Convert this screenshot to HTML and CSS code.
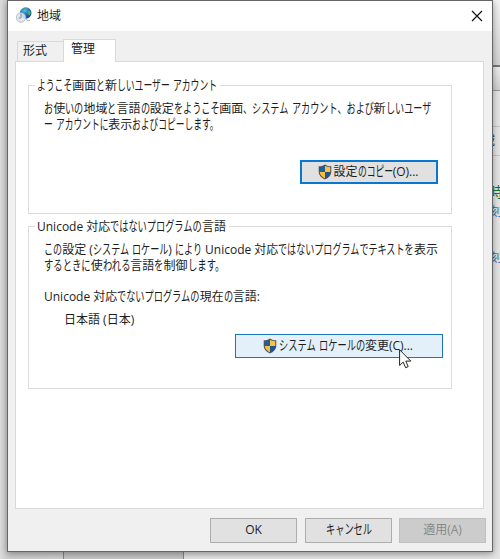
FILE: index.html
```html
<!DOCTYPE html>
<html lang="ja">
<head>
<meta charset="utf-8">
<title>地域</title>
<link rel="stylesheet" href="styles.css">
</head>
<body>
<svg width="0" height="0" class="defs"><defs>
<symbol id="shield" viewBox="0 0 14 16">
<path d="M7 .5C5.3 1.9 3.2 2.3.7 2.3v5.2c0 4 2.8 6.4 6.3 8 3.5-1.6 6.3-4 6.3-8V2.3C10.8 2.3 8.7 1.9 7 .5Z" fill="#4c5358"/>
<path d="M7 1.8C5.5 2.8 3.7 3.2 1.7 3.3V8H7Z" fill="#1e5f9f"/>
<path d="M7 1.8C8.5 2.8 10.3 3.2 12.3 3.3V8H7Z" fill="#fbc23f"/>
<path d="M1.7 8c.2 3.1 2.4 5 5.3 6.4V8Z" fill="#f9bd36"/>
<path d="M12.3 8c-.2 3.1-2.4 5-5.3 6.4V8Z" fill="#1d559b"/>
</symbol></defs></svg>
<div class="desktop">
  <div class="strip">
    <div class="s1"></div><div class="s2"></div><div class="s3"></div><div class="s4"><span>域</span></div>
    <div class="s5"><b>時</b><a>刻</a><a class="low">刻</a></div>
  </div>
  <div class="pane"></div><div class="pane2"></div>
  <main class="dialog">
    <header class="titlebar">
      <svg class="globe" width="16" height="16" viewBox="0 0 16 16">
        <defs><radialGradient id="g" cx=".4" cy=".25" r=".8"><stop offset="0" stop-color="#5cc5ef"/><stop offset=".5" stop-color="#1c70bd"/><stop offset="1" stop-color="#123a92"/></radialGradient></defs>
        <circle cx="9.7" cy="6" r="5.8" fill="url(#g)"/>
        <path d="M5.5 3 8 .7l2 .4-1 1.5-2 1ZM11.5 4l2.4-.8 1 3-1.6 2.4-2-2Z" fill="#49a958"/>
        <circle cx="5" cy="10.5" r="4.7" fill="#e0e7ec" fill-opacity=".9" stroke="#a6b4be" stroke-width=".8"/>
        <path d="M5 7v4H2.7" fill="none" stroke="#7891a2"/>
        <path d="M10 12.5q2 2 4 1" fill="none" stroke="#a1adb8"/>
      </svg>
      <span class="line">地域</span>
      <svg class="close" width="12" height="12" viewBox="0 0 12 12"><path d="M1 1 11 11M11 1 1 11" stroke="#111" stroke-width="1.15"/></svg>
    </header>
    <nav class="tabs"><div class="tab"><span class="line">形式</span></div><div class="tab active"><span class="line">管理</span></div></nav>
    <section class="page">
      <div class="group welcome">
        <h2><span class="line" data-width="180">ようこそ画面と新しいユーザー アカウント</span></h2>
        <p><span class="line" data-width="387">お使いの地域と言語の設定をようこそ画面、システム アカウント、および新しいユーザ</span></p>
        <p><span class="line" data-width="175">ー アカウントに表示およびコピーします。</span></p>
        <button class="btn copy"><svg width="14" height="16"><use href="#shield"/></svg><span class="line" data-width="85">設定のコピー(O)...</span></button>
      </div>
      <div class="group locale">
        <h2><span class="line" data-width="189">Unicode 対応ではないプログラムの言語</span></h2>
        <p><span class="line" data-width="394">この設定 (システム ロケール) により Unicode 対応ではないプログラムでテキストを表示</span></p>
        <p><span class="line" data-width="180">するときに使われる言語を制御します。</span></p>
        <p class="current"><span class="line" data-width="216">Unicode 対応でないプログラムの現在の言語:</span></p>
        <p class="value"><span class="line">日本語 (日本)</span></p>
        <button class="btn change"><svg width="14" height="16"><use href="#shield"/></svg><span class="line" data-width="134">システム ロケールの変更(C)...</span></button>
      </div>
    </section>
    <footer class="actions">
      <button class="btn"><span class="line">OK</span></button>
      <button class="btn"><span class="line" data-width="46">キャンセル</span></button>
      <button class="btn disabled"><span class="line">適用(A)</span></button>
    </footer>
  </main>
  <svg class="cursor" width="13" height="20" viewBox="0 0 13 20"><path d="M.6.8v15.7l3.6-3.4 2.4 5.6 2.6-1.1-2.4-5.5h5Z" fill="#fff" stroke="#222"/></svg>
</div>
<script src="script.js"></script>
</body>
</html>
```
FILE: styles.css
```css
* { box-sizing: border-box; }
body { margin: 0; font: 12px/16px "Open Sans", "Noto Sans CJK JP", sans-serif; color: #1c1c1c; }
.defs { position: absolute; }
.desktop { position: relative; width: 500px; height: 559px; overflow: hidden; background: linear-gradient(90deg, #dcdcdc 0, #d0d0d0 7px, #dedede 300px); }
.strip { position: absolute; left: 490px; top: 0; width: 10px; height: 559px; background: #e5e5e5; }
.s1 { height: 67px; background: linear-gradient(#f4f4f4, #d3d3d3); border-bottom: 2px solid #777; }
.s2 { height: 24px; background: linear-gradient(#ededed, #cfcfcf); border-bottom: 1px solid #999; }
.s3 { height: 36px; border-bottom: 1px solid #c4c4c4; }
.s4 { height: 29px; padding-top: 6px; border-bottom: 1px solid #c4c4c4; }
.s4 span { margin-left: -7px; }
.s5 { padding-top: 26px; }
.s5 b, .s5 a { display: block; width: 14px; height: 20px; line-height: 20px; color: #246fab; }
.s5 b { color: #16762d; font-size: 14px; font-weight: 400; margin-left: -1px; }
.s5 .low { margin-top: 26px; }
.pane { position: absolute; left: 63px; top: 540px; width: 121px; height: 19px; background: #c8c8c8; border: solid #868686; border-width: 0 1px; }
.pane2 { position: absolute; left: 184px; top: 540px; width: 316px; height: 19px; background: #e5e5e5; }
.dialog { position: relative; display: flex; flex-direction: column; width: 486px; height: 552px; margin-left: 7px; border: 1px solid #666; background: #f0f0f0; box-shadow: 0 2px 7px rgba(0,0,0,.38); }
.titlebar { display: flex; align-items: center; height: 30px; padding: 0 9px 0 8px; background: #fff; }
.globe { margin-top: -2px; }
.titlebar .line { margin-left: 5px; }
.close { margin-left: auto; margin-top: -1px; }
.line { white-space: pre; display: inline-block; }
.kana { display: inline-block; white-space: pre; transform-origin: 0 55%; }
.tabs { display: flex; align-items: flex-end; height: 30px; padding-left: 9px; }
.tab { width: 46px; height: 20px; padding: 1px 0 0 5px; border: 1px solid #d9d9d9; border-width: 1px 0 0 1px; }
.active { position: relative; width: 53px; height: 23px; padding: 1px 0 0 7px; margin-bottom: -1px; background: #fff; border-width: 1px 1px 0; }
.page { height: 448px; margin: 0 8px 0 7px; padding: 23px 31px 0 12px; background: #fff; border: 1px solid #d9d9d9; }
.group { display: flex; flex-direction: column; width: 424px; padding-left: 15px; border: 1px solid #dcdcdc; }
h2 { align-self: flex-start; height: 16px; margin: -8px 0 0 -9px; padding: 0 3px 0 2px; background: #fff; font: inherit; }
p { height: 16px; margin: 0; }
.welcome { height: 129px; }
.welcome h2 { margin-bottom: 7px; }
.locale { height: 163px; margin-top: 12px; }
.locale h2 { margin-bottom: 7px; }
.current { margin-top: 15px; }
.value { margin: 7px 0 0 20px; }
.btn { display: flex; align-items: center; justify-content: center; width: 87px; height: 25px; padding: 0 0 1px; border: 1px solid #adadad; background: #e1e1e1; font: inherit; color: inherit; }
.btn svg { margin-right: 2px; }
.copy { width: 138px; height: 24px; padding-right: 2px; border: 2px solid #0877d1; margin: 27px 13px 0 auto; }
.change { width: 208px; height: 24px; padding-right: 2px; background: #e3f0fa; border-color: #1b78b5; margin: 6px 8px 0 auto; }
.actions { display: flex; gap: 8px; justify-content: flex-end; padding: 9px 6px 0 0; }
.disabled { color: #898989; background: #ccc; border-color: #bfbfbf; margin-left: -1px; }
.cursor { position: absolute; left: 399px; top: 349px; }
```
FILE: script.js
```js
// Condense kana like a UI font, leaving kanji and Latin at their full width.
document.querySelectorAll('.line[data-width]').forEach(line => {
  const parts = line.textContent.split(/([ぁ-んァ-ヶー、。]+)/);
  line.textContent = '';
  parts.filter(Boolean).forEach(part => {
    const span = document.createElement('span');
    span.textContent = part;
    if (/^[ぁ-んァ-ヶー、。]/.test(part)) span.className = 'kana';
    line.append(span);
  });
  const kana = [...line.querySelectorAll('.kana')];
  const widths = kana.map(k => k.getBoundingClientRect().width);
  const total = widths.reduce((a, b) => a + b, 0);
  const scale = (Number(line.dataset.width) - line.getBoundingClientRect().width + total) / total;
  kana.forEach((k, i) => {
    k.style.width = widths[i] * scale + 'px';
    k.style.transform = `scale(${scale}, 1.12)`;
  });
});
```
